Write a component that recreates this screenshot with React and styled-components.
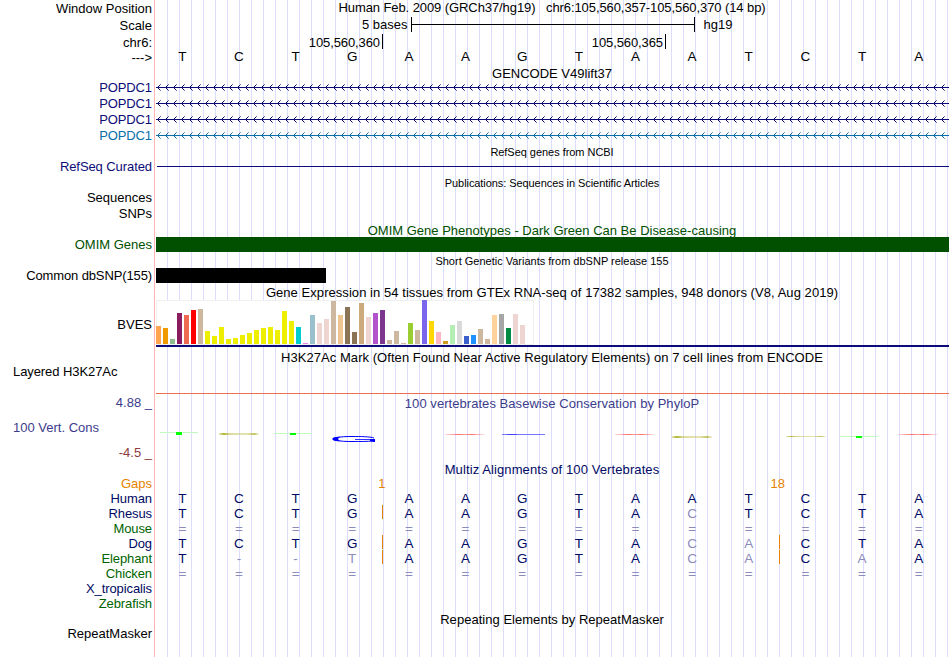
import styled, { createGlobalStyle } from "styled-components";

const GlobalStyle = createGlobalStyle`
  body {
    margin: 0;
    background: #fff;
    overflow: hidden;
  }
`;

// Styled Components
const Browser = styled.main`
  width: 950px;
  height: 657px;
  overflow: hidden;
  font: 13px/15px "Liberation Sans", Arial, sans-serif;
  color: #000;
  white-space: pre;
  background:
    linear-gradient(#ffb4b4, #ffb4b4) 154px 0 / 1px 100% no-repeat,
    linear-gradient(#fff, #fff) 0 0 / 156px 100% no-repeat,
    linear-gradient(90deg, #dcdcff 1px, transparent 1px) 167px 0 / 12px 100% repeat-x,
    #fff;
`;

const Row = styled.section`
  display: grid;
  grid-template-columns: 154px 794px;
  column-gap: 1px;
  height: ${props => props.$height || 15}px;
`;

const Label = styled.div`
  display: flex;
  flex-direction: column;
  box-sizing: border-box;
  align-items: ${props => (props.$left ? "flex-start" : "flex-end")};
  padding: ${props => (props.$left ? "0 0 0 13px" : "0 2px 0 0")};
  height: ${props => props.$height || 15}px;
  color: ${props => props.color};
  letter-spacing: ${props => props.$track || 0}px;

  span {
    margin-top: ${props => props.$drop || 0}px;
  }
`;

const Title = styled.h2`
  margin: 0;
  padding-top: ${props => props.$drop || 0}px;
  font-size: ${props => (props.$small ? "11px" : "13px")};
  font-weight: 400;
  text-align: center;
  color: ${props => props.color};
  letter-spacing: ${props => props.$track || 0}px;
`;

const ScaleLine = styled.div`
  display: flex;
  padding-left: 207px;

  i {
    box-sizing: border-box;
    width: 284px;
    height: 15px;
    margin: 0 9px 0 3px;
    border: solid #000;
    border-width: 0 1px;
    background: linear-gradient(#000, #000) 0 7px / 100% 1px no-repeat;
  }
`;

const Ruler = styled.div`
  display: flex;
`;

const RulerTick = styled.div`
  box-sizing: border-box;
  width: ${props => props.$width}px;
  height: 15px;
  padding: 1px 2px 0 0;
  border-right: 1px solid #000;
  text-align: right;
  letter-spacing: -0.1px;
`;

const Bases = styled.div`
  display: grid;
  grid-template-columns: repeat(14, 1fr);
  width: 793px;
  margin-left: -1px;
  font-size: 13.5px;
  text-align: center;
  color: ${props => props.color};
`;

const Base = styled.span`
  position: relative;
  color: ${props => (props.$faded ? "#8c8cbc" : "inherit")};
`;

const GapMark = styled.i`
  position: absolute;
  right: ${props => props.$right}px;
  top: -1px;
  width: 1px;
  height: 14px;
  background: #e68200;
`;

const GapCount = styled.span`
  position: absolute;
  right: ${props => props.$right}px;
  top: 0;
  font-size: 13px;
  color: #e68200;
`;

const Solid = styled.div`
  width: ${props => props.$width || 793}px;
  height: ${props => props.$height}px;
  margin: ${props => props.$drop || 0}px 0 0 auto;
  margin-left: ${props => props.$inset || 1}px;
  background: ${props => props.color};
`;

const Expression = styled.div`
  margin-left: 1px;
  height: 45px;
  border-bottom: 2px solid #0c0c78;
`;

const Bars = styled.div`
  display: flex;
  align-items: flex-end;
  gap: 2px;
  box-sizing: border-box;
  width: 378px;
  height: 45px;
  background: #fff;
  box-shadow: inset 0 0 0 1px #f0f0f0;
  padding-bottom: 1px;
`;

const Bar = styled.div`
  flex: none;
  width: 5px;
`;

const Strand = styled.svg`
  display: block;
  margin-left: 1px;
`;

const NAVY = "#0c0c78";
const ALIGN_NAVY = "#000a64";
const GREEN = "#006400";

const transcripts = [NAVY, NAVY, NAVY, "#0a6eaa"];

// [colour, height] for each GTEx tissue
const tissues = [
  ["#ffa54f", 18], ["#ee9a00", 16], ["#8fbc8f", 5], ["#8b1c62", 31], ["#ee6a50", 29],
  ["#ff0000", 34], ["#cdb79e", 35], ["#eeee00", 13], ["#eeee00", 8], ["#eeee00", 17],
  ["#eeee00", 5], ["#eeee00", 6], ["#eeee00", 9], ["#eeee00", 11], ["#eeee00", 14],
  ["#eeee00", 16], ["#eeee00", 17], ["#eeee00", 14], ["#eeee00", 33], ["#eeee00", 23],
  ["#00cdcd", 17], ["#ee82ee", 1], ["#9ac0cd", 29], ["#eed5d2", 21], ["#eed5d2", 25],
  ["#cdb79e", 43], ["#eec591", 29], ["#8b7355", 37], ["#8b7355", 12], ["#cdaa7d", 41],
  ["#eed5d2", 27], ["#b452cd", 31], ["#7a378b", 34], ["#cdb79e", 4], ["#cdb79e", 13],
  ["#cdb79e", 1], ["#9acd32", 21], ["#cdb79e", 14], ["#7a67ee", 44], ["#ffd700", 23],
  ["#ffb6c1", 12], ["#cd9b1d", 3], ["#b4eeb4", 19], ["#d9d9d9", 23], ["#3a5fcd", 8],
  ["#1e90ff", 9], ["#cdb79e", 15], ["#cdb79e", 5], ["#ffd39b", 29], ["#a6a6a6", 30],
  ["#008b45", 16], ["#eed5d2", 30], ["#eed5d2", 19], ["#ff00ff", 0],
];

// Lower case marks a base that differs from human
const species = [
  { name: "Human", color: ALIGN_NAVY, bases: "TCTGAAGTAATCTA" },
  { name: "Rhesus", color: ALIGN_NAVY, bases: "TCTGAAGTAcTCTA", gaps: [3] },
  { name: "Mouse", color: GREEN, bases: "==============" },
  { name: "Dog", color: ALIGN_NAVY, bases: "TCTGAAGTAcaCTA", gaps: [3, 10] },
  { name: "Elephant", color: GREEN, bases: "T--tAAGTAcaCaA", gaps: [3, 10] },
  { name: "Chicken", color: GREEN, bases: "==============" },
  { name: "X_tropicalis", color: ALIGN_NAVY, bases: "" },
  { name: "Zebrafish", color: GREEN, bases: "" },
];

const isFaded = base => base === "=" || base === "-" || base !== base.toUpperCase();

function Transcript({ color, id }) {
  return (
    <Strand width="793" height="16" shapeRendering="crispEdges">
      <defs>
        <pattern id={id} width="8" height="16" patternUnits="userSpaceOnUse">
          <path d="M1 7h1v1h-1zM2 6h1v1h-1zM2 8h1v1h-1zM3 5h1v1h-1zM3 9h1v1h-1z" fill={color} />
          <path d="M4 4h1v1h-1zM4 10h1v1h-1z" fill={color} opacity=".6" />
        </pattern>
      </defs>
      <rect width="793" height="16" fill={`url(#${id})`} />
      <rect y="7" width="793" height="1" fill={color} />
    </Strand>
  );
}

function Conservation() {
  return (
    <svg width="794" height="50" viewBox="155 412 794 50">
      <defs>
        <linearGradient id="olive">
          <stop offset="0" stopColor="#b4b432" stopOpacity=".3" />
          <stop offset=".12" stopColor="#b4b432" />
          <stop offset=".3" stopColor="#c8c864" stopOpacity=".6" />
          <stop offset=".7" stopColor="#c8c864" stopOpacity=".5" />
          <stop offset=".88" stopColor="#b4b432" stopOpacity=".8" />
          <stop offset="1" stopColor="#b4b432" stopOpacity=".1" />
        </linearGradient>
        <linearGradient id="red">
          <stop offset="0" stopColor="#ff5050" stopOpacity=".2" />
          <stop offset=".35" stopColor="#ff4646" stopOpacity=".8" />
          <stop offset=".5" stopColor="#ff7878" stopOpacity=".7" />
          <stop offset=".65" stopColor="#ff4646" stopOpacity=".8" />
          <stop offset="1" stopColor="#ff5050" stopOpacity=".1" />
        </linearGradient>
      </defs>
      <g fill="#c0fac0">
        <rect x="160" y="432" width="38" height="1" />
        <rect x="274" y="433" width="38" height="1" />
        <rect x="840" y="436" width="38" height="1" />
      </g>
      <g fill="#00ff00">
        <rect x="176" y="432" width="6" height="3" />
        <rect x="290" y="433" width="6" height="2" />
        <rect x="856" y="436" width="6" height="2" />
      </g>
      <g fill="url(#olive)">
        <rect x="219" y="433" width="40" height="2" />
        <rect x="672" y="436" width="40" height="2" />
        <rect x="786" y="436" width="40" height="1" />
      </g>
      <g fill="url(#red)">
        <rect x="445" y="434" width="40" height="1" />
        <rect x="615" y="434" width="40" height="1" />
        <rect x="898" y="434" width="40" height="1" />
      </g>
      <rect x="502" y="434" width="43" height="1" fill="#7878ff" />
      <rect x="507" y="434" width="10" height="1" fill="#4646ff" />
      <g fill="none" stroke="#0000ff">
        <path d="M336 438C341 436.5 346 436.5 353 436.5S370 436.5 374 438" />
        <path d="M336 440C341 441.5 346 441.5 353 441.5S368 441.5 372 441" />
        <path d="M355 439.5h16" strokeOpacity=".8" />
      </g>
      <path d="M332 439l2-1.8 6-.8-2 2.6 2 2.6-6-.8zM370 439h5v3h-2l-3-1z" fill="#0000ff" />
    </svg>
  );
}

function TitleRow({ children, height, ...rest }) {
  return (
    <Row $height={height}>
      <span />
      <Title {...rest}>{children}</Title>
    </Row>
  );
}

function Alignment({ bases, color, gaps = [] }) {
  return (
    <Bases color={color}>
      {[...bases].map((base, i) => (
        <Base key={i} $faded={isFaded(base)}>
          {base.toUpperCase()}
          {gaps.includes(i) && <GapMark $right={i === 3 ? -2 : -2.6} />}
        </Base>
      ))}
    </Bases>
  );
}

export default function App() {
  return (
    <>
      <GlobalStyle />
      <Browser>
        <Row $height={17}>
          <Label $drop={1}><span>Window Position</span></Label>
          <Title $track={-0.085}>Human Feb. 2009 (GRCh37/hg19)   chr6:105,560,357-105,560,370 (14 bp)</Title>
        </Row>
        <Row $height={17}>
          <Label $drop={1}><span>Scale</span></Label>
          <ScaleLine>5 bases<i />hg19</ScaleLine>
        </Row>
        <Row>
          <Label $drop={1}><span>chr6:</span></Label>
          <Ruler>
            <RulerTick $width={228}>105,560,360</RulerTick>
            <RulerTick $width={283}>105,560,365</RulerTick>
          </Ruler>
        </Row>
        <Row $height={17}>
          <Label $drop={1}><span>---&gt;</span></Label>
          <Alignment bases="TCTGAAGTAATCTA" color="#000" />
        </Row>

        <TitleRow height={14}>GENCODE V49lift37</TitleRow>
        {transcripts.map((color, i) => (
          <Row key={i} $height={16}>
            <Label color={color} $track={-0.1}><span>POPDC1</span></Label>
            <Transcript color={color} id={`strand${i}`} />
          </Row>
        ))}

        <TitleRow $small $drop={1} $track={-0.04}>RefSeq genes from NCBI</TitleRow>
        <Row $height={16}>
          <Label color={NAVY} $track={-0.08}><span>RefSeq Curated</span></Label>
          <Solid $drop={7} $height={1} $inset={2} $width={792} color={NAVY} />
        </Row>

        <TitleRow $small $drop={1} $track={-0.07}>
          Publications: Sequences in Scientific Articles
        </TitleRow>
        <Row $height={16}><Label><span>Sequences</span></Label></Row>
        <Row $height={16}><Label><span>SNPs</span></Label></Row>

        <TitleRow $drop={1} color="#005000">
          OMIM Gene Phenotypes - Dark Green Can Be Disease-causing
        </TitleRow>
        <Row $height={16}>
          <Label color="#005000"><span>OMIM Genes</span></Label>
          <Solid $height={15} color="#005000" />
        </Row>

        <TitleRow $small $drop={1}>Short Genetic Variants from dbSNP release 155</TitleRow>
        <Row $height={16}>
          <Label $track={-0.12}><span>Common dbSNP(155)</span></Label>
          <Solid $height={15} $width={170} color="#000" />
        </Row>

        <TitleRow height={16} $drop={1} $track={0.055}>
          Gene Expression in 54 tissues from GTEx RNA-seq of 17382 samples, 948 donors (V8, Aug 2019)
        </TitleRow>
        <Row $height={47}>
          <Label $drop={17}><span>BVES</span></Label>
          <Expression>
            <Bars>
              {tissues.map(([color, height], i) => (
                <Bar key={i} style={{ height, background: color }} />
              ))}
            </Bars>
          </Expression>
        </Row>

        <TitleRow height={17} $drop={3} $track={0.05}>
          H3K27Ac Mark (Often Found Near Active Regulatory Elements) on 7 cell lines from ENCODE
        </TitleRow>
        <Row $height={30}>
          <Label $left $track={-0.08}><span>Layered H3K27Ac</span></Label>
          <Solid $drop={29} $height={1} color="#f06e50" />
        </Row>

        <Row $height={18}>
          <Label $drop={1} color="#3c3c8c"><span>4.88 _</span></Label>
          <Title $drop={2} $track={0.05} color="#3c3c8c">
            100 vertebrates Basewise Conservation by PhyloP
          </Title>
        </Row>
        <Row $height={50}>
          <div>
            <Label $left $drop={8} $height={25} color="#3c3c8c"><span>100 Vert. Cons</span></Label>
            <Label $drop={8} color="#8c3c3c"><span>-4.5 _</span></Label>
          </div>
          <Conservation />
        </Row>

        <TitleRow height={14} $track={0.1} color={ALIGN_NAVY}>
          Multiz Alignments of 100 Vertebrates
        </TitleRow>
        <Row>
          <Label color="#e68200"><span>Gaps</span></Label>
          <Bases>
            {[...Array(14)].map((_, i) => (
              <Base key={i}>
                {i === 3 && <GapCount $right={-5}>1</GapCount>}
                {i === 10 && <GapCount $right={-8}>18</GapCount>}
              </Base>
            ))}
          </Bases>
        </Row>
        {species.map(({ name, color, bases, gaps }) => (
          <Row key={name}>
            <Label color={color} $track={-0.1}><span>{name}</span></Label>
            <Alignment bases={bases} color={ALIGN_NAVY} gaps={gaps} />
          </Row>
        ))}

        <TitleRow $drop={1} $track={0.03}>Repeating Elements by RepeatMasker</TitleRow>
        <Row><Label><span>RepeatMasker</span></Label></Row>
      </Browser>
    </>
  );
}
